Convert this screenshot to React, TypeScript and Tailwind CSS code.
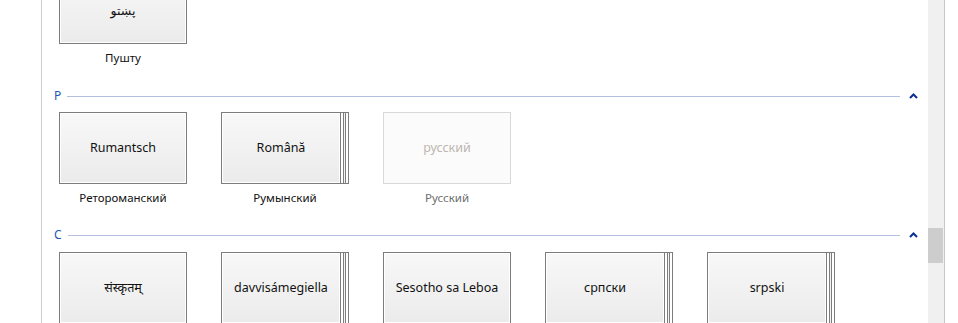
import React from "react";

type Item = { native: string; label?: string; stacked?: boolean; disabled?: boolean; pad?: boolean };

const FONT = { fontFamily: '"Segoe UI", "Noto Sans", "DejaVu Sans", sans-serif' };

function Chevron() {
  return (
    <svg width="9" height="6" viewBox="0 0 9 6" className="shrink-0">
      <polyline points="1,5 4.5,1.5 8,5" fill="none" stroke="#0a2f96" strokeWidth="2" />
    </svg>
  );
}

function Tile({ item }: { item: Item }) {
  if (item.disabled) {
    return (
      <div className="h-[72px] w-[128px] border border-[#d9d9d9] bg-[#fbfbfb] flex items-center justify-center text-[12.5px] text-[#bdb6b0]">
        {item.native}
      </div>
    );
  }
  const face =
    "h-[72px] border border-[#7c7c7c] bg-gradient-to-b from-[#f8f8f8] to-[#ebebeb] shadow-[inset_0_0_0_1px_#ffffff] flex items-center justify-center text-[12.5px] text-[#111] " +
    (item.pad ? "pt-[6px]" : "");
  if (!item.stacked) {
    return <div className={face + " w-[128px]"}>{item.native}</div>;
  }
  return (
    <div className="flex h-[72px] w-[128px]">
      <div className={face + " w-[120px] shrink-0"}>{item.native}</div>
      <div className="w-[3px] shrink-0 border-y border-r border-[#7c7c7c] bg-white" />
      <div className="w-[2px] shrink-0 border-y border-r border-[#7c7c7c] bg-[#f4f4f4]" />
      <div className="w-[3px] shrink-0 border-y border-r border-[#7c7c7c] bg-white" />
    </div>
  );
}

function Row({ items }: { items: Item[] }) {
  return (
    <div className="flex gap-[34px] pl-[17px]">
      {items.map((it, i) => (
        <div key={i} className="flex w-[128px] flex-col items-center">
          <Tile item={it} />
          {it.label !== undefined && (
            <div
              className={
                "mt-[6px] text-[11.5px] leading-[16px] " +
                (it.disabled ? "text-[#6d6d6d]" : "text-[#111]")
              }
            >
              {it.label}
            </div>
          )}
        </div>
      ))}
    </div>
  );
}

function Header({ letter }: { letter: string }) {
  return (
    <div className="flex h-[16px] items-center pl-[12px] pr-[10px]">
      <span className="text-[12px] leading-[16px] text-[#1d56b5]">{letter}</span>
      <div className="ml-[6px] mr-[9px] h-px flex-1 bg-[#b3bfde]" />
      <Chevron />
    </div>
  );
}

export default function App() {
  return (
    <div className="flex h-[323px] w-[958px] overflow-hidden bg-white" style={FONT}>
      <div className="w-[41px] shrink-0" />
      <div className="w-px shrink-0 bg-[#cdcdcd]" />
      <div className="w-[886px] shrink-0 overflow-hidden">
        <div className="-mt-[28px]">
          <Row items={[{ native: "پښتو", label: "Пушту", pad: true }]} />
          <div className="mt-[22px]">
            <Header letter="P" />
            <div className="mt-[8px]">
              <Row
                items={[
                  { native: "Rumantsch", label: "Ретороманский" },
                  { native: "Română", label: "Румынский", stacked: true },
                  { native: "русский", label: "Русский", disabled: true },
                ]}
              />
            </div>
          </div>
          <div className="mt-[21px]">
            <Header letter="C" />
            <div className="mt-[9px]">
              <Row
                items={[
                  { native: "संस्कृतम्" },
                  { native: "davvisámegiella", stacked: true },
                  { native: "Sesotho sa Leboa" },
                  { native: "српски", stacked: true },
                  { native: "srpski", stacked: true },
                ]}
              />
            </div>
          </div>
        </div>
      </div>
      <div className="flex w-[16px] shrink-0 flex-col bg-[#f0f0f0]">
        <div className="h-[228px]" />
        <div className="h-[35px] w-[15px] bg-[#cdcdcd]" />
      </div>
      <div className="w-px shrink-0 bg-[#c6c6c6]" />
      <div className="w-[13px] shrink-0" />
    </div>
  );
}
